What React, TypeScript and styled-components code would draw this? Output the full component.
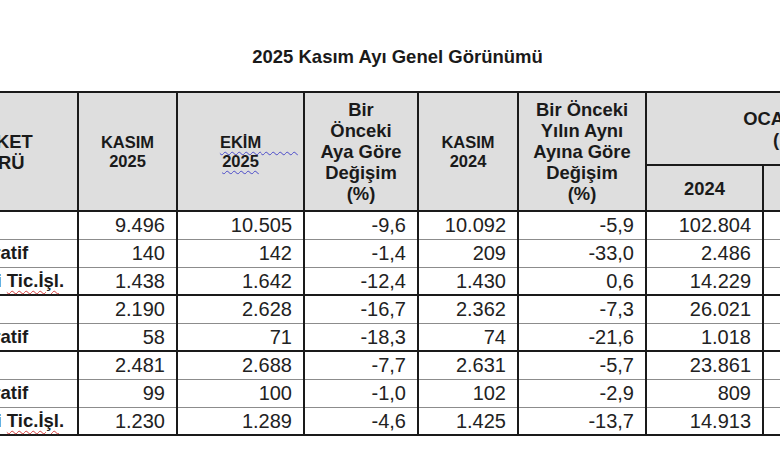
import React from 'react'
import styled, { createGlobalStyle } from 'styled-components'

type Row = {
  label: string
  lead?: boolean
  flagged?: boolean
  end?: boolean
  values: string[]
}

const ROWS: Row[] = [
  { label: 'Şirket', lead: true, values: ['9.496', '10.505', '-9,6', '10.092', '-5,9', '102.804', '', ''] },
  { label: 'Kooperatif', values: ['140', '142', '-1,4', '209', '-33,0', '2.486', '', ''] },
  { label: 'Gerçek Kişi ', flagged: true, end: true, values: ['1.438', '1.642', '-12,4', '1.430', '0,6', '14.229', '', ''] },
  { label: 'Şirket', lead: true, values: ['2.190', '2.628', '-16,7', '2.362', '-7,3', '26.021', '', ''] },
  { label: 'Kooperatif', end: true, values: ['58', '71', '-18,3', '74', '-21,6', '1.018', '', ''] },
  { label: 'Şirket', lead: true, values: ['2.481', '2.688', '-7,7', '2.631', '-5,7', '23.861', '', ''] },
  { label: 'Kooperatif', values: ['99', '100', '-1,0', '102', '-2,9', '809', '', ''] },
  { label: 'Gerçek Kişi ', flagged: true, end: true, values: ['1.230', '1.289', '-4,6', '1.425', '-13,7', '14.913', '', ''] },
]

const COLUMNS = [188, 99, 127, 114, 100, 128, 117, 117, 80]

const GlobalStyle = createGlobalStyle`
  html, body {
    margin: 0;
    padding: 0;
    background: #ffffff;
    overflow: hidden;
  }
  body {
    font-family: 'Liberation Sans', Arial, sans-serif;
    color: #1e1e1e;
  }
`

const Page = styled.div`
  width: 780px;
  height: 470px;
  overflow: hidden;
  background: #ffffff;
`

const Title = styled.h1`
  margin: 0 0 23px;
  padding: 46px 0 0 15px;
  font-size: 18.5px;
  line-height: 22px;
  font-weight: 700;
  text-align: center;
  color: #1a1a1a;
`

const Sheet = styled.table`
  border-collapse: collapse;
  table-layout: fixed;
  width: 1070px;
  margin-left: -111px;
`

const HeadRow = styled.tr<{ $h: number }>`
  height: ${(p) => p.$h}px;
`

const HeadCell = styled.th<{ $small?: boolean; $shift?: number }>`
  background: #dedede;
  border: 2px solid #1a1a1a;
  padding: 0 0 0 ${(p) => p.$shift ?? 0}px;
  font-size: ${(p) => (p.$small ? '16.5px' : '18.4px')};
  line-height: ${(p) => (p.$small ? '18.5px' : '21px')};
  font-weight: 700;
  text-align: center;
  vertical-align: middle;
  white-space: nowrap;
  color: #1a1a1a;
`

const BodyRow = styled.tr`
  height: 28px;
`

const Cell = styled.td<{ $end?: boolean }>`
  border-left: 2px solid #1a1a1a;
  border-right: 2px solid #1a1a1a;
  border-bottom: ${(p) => (p.$end ? '2px solid #1a1a1a' : '1.5px solid #8c8c8c')};
  padding: 0 11px 0 0;
  font-size: 20px;
  line-height: 22px;
  text-align: right;
  white-space: nowrap;
  color: #222222;
`

const LabelCell = styled(Cell)<{ $lead?: boolean }>`
  padding: 0 12px 0 8px;
  font-size: 18.5px;
  font-weight: 700;
  text-align: ${(p) => (p.$lead ? 'left' : 'center')};
  color: #1a1a1a;
`

const Squiggle = styled.span<{ $tone: string }>`
  position: relative;
  text-decoration: underline wavy ${(p) => p.$tone};
  text-decoration-thickness: 1px;
  text-underline-offset: 3px;
`

const SquiggleTail = styled.span<{ $tone: string }>`
  position: absolute;
  left: 100%;
  top: 0;
  white-space: pre;
  text-decoration: underline wavy ${(p) => p.$tone};
  text-decoration-thickness: 1px;
  text-underline-offset: 3px;
`

const GRAMMAR = '#4a4ac8'
const SPELLING = '#d23c3c'

const App = () => {
  return (
    <Page>
      <GlobalStyle />
      <Title>2025 Kasım Ayı Genel Görünümü</Title>
      <Sheet>
        <colgroup>
          {COLUMNS.map((w, i) => (
            <col key={`col-${i}`} style={{ width: w }} />
          ))}
        </colgroup>
        <thead>
          <HeadRow $h={73}>
            <HeadCell rowSpan={2} $shift={30}>
              ŞİRKET
              <br />
              TÜRÜ
            </HeadCell>
            <HeadCell rowSpan={2} $small>
              KASIM
              <br />
              2025
            </HeadCell>
            <HeadCell rowSpan={2} $small>
              <Squiggle $tone={GRAMMAR}>
                EKİM
                <SquiggleTail $tone={GRAMMAR}>{'\u00a0'.repeat(8)}</SquiggleTail>
              </Squiggle>
              <br />
              <Squiggle $tone={GRAMMAR}>2025</Squiggle>
            </HeadCell>
            <HeadCell rowSpan={2}>
              Bir
              <br />
              Önceki
              <br />
              Aya Göre
              <br />
              Değişim
              <br />
              (%)
            </HeadCell>
            <HeadCell rowSpan={2} $small>
              KASIM
              <br />
              2024
            </HeadCell>
            <HeadCell rowSpan={2}>
              Bir Önceki
              <br />
              Yılın Aynı
              <br />
              Ayına Göre
              <br />
              Değişim
              <br />
              (%)
            </HeadCell>
            <HeadCell colSpan={3}>
              OCAK-KASIM
              <br />
              (11 AY)
            </HeadCell>
          </HeadRow>
          <HeadRow $h={46}>
            <HeadCell>2024</HeadCell>
            <HeadCell>2025</HeadCell>
            <HeadCell>
              Değişim
              <br />
              (%)
            </HeadCell>
          </HeadRow>
        </thead>
        <tbody>
          {ROWS.map((row, index) => (
            <BodyRow key={`row-${index}`}>
              <LabelCell $lead={row.lead} $end={row.end}>
                {row.label}
                {row.flagged && <Squiggle $tone={SPELLING}>Tic.İşl</Squiggle>}
                {row.flagged && '.'}
              </LabelCell>
              {row.values.map((v, j) => (
                <Cell key={`v-${index}-${j}`} $end={row.end}>
                  {v}
                </Cell>
              ))}
            </BodyRow>
          ))}
        </tbody>
      </Sheet>
    </Page>
  )
}

export default App
